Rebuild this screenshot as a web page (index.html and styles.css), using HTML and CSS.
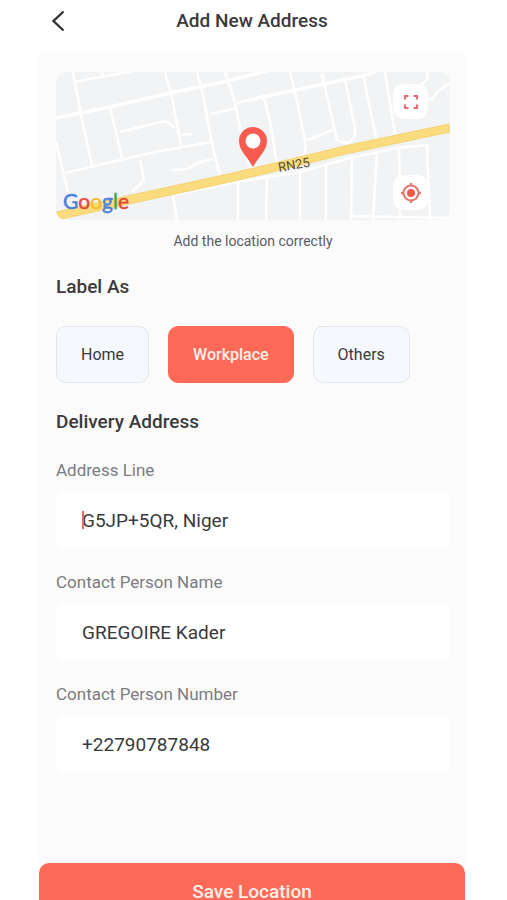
FILE: index.html
```
<!DOCTYPE html>
<html lang="en">
<head>
  <meta charset="UTF-8">
  <meta name="viewport" content="width=device-width, initial-scale=1.0">
  <title>Add New Address</title>
  <link rel="stylesheet" href="styles.css">
</head>
<body>
  <div class="screen">
    <header class="topbar">
      <button type="button" class="back" aria-label="Back">
        <svg width="14" height="24" viewBox="0 0 14 24"><path d="M12.5 2.5 2.5 12l10 9.5" fill="none" stroke="#333" stroke-width="2.4"/></svg>
      </button>
      <h1>Add New Address</h1>
    </header>

    <form class="address-form">
      <div class="map">
        <svg class="map-canvas" viewBox="0 0 394 148" preserveAspectRatio="xMidYMid slice">
          <rect width="394" height="148" fill="#f1f3f5"/>
          <!-- side streets -->
          <g fill="none" stroke="#fff" stroke-width="2.6" stroke-linejoin="round">
            <path d="M0 46 54 35 114 21 167 10 215-2" stroke-width="3.4"/>
            <path d="M17 0 25 43 36 93M19 10 50 4 84-2M45 0 49 5"/>
            <path d="M54 35 66 86M64 60 105 50Q113 48 118 56M109 0 115 21 125 73M126 63 136 62"/>
            <path d="M9 101 64 88 94 81 154 70M0 70 12 120"/>
            <path d="M141 0 147 23 157 76 164 104M116 98 131 97 144 90 157 87M84 88 88 108 76 120"/>
            <path d="M169 0 179 30 184 56 194 96M154 42 181 36M181 31 208 24"/>
            <path d="M194 28 234 19 301 5 320 0" stroke-width="3.4"/>
            <path d="M208 26 214 50 221 92M234 0 239 20 250 73 248 86"/>
            <path d="M266 2 281 68Q286 72 293 70 301 66 299 56L289 8M251 68 277 58"/>
            <path d="M307 3 321 70M329 0 339 62M371 0 372 7 364 14M394 11 381 20 376 28 371 26"/>
            <path d="M117 123 180 110 244 100 294 86 341 76 371 73 374 148M294 144 394 146"/>
            <path d="M117 123 121 148M182 110V148M211 103 210 148M244 100V148M270 92V148M296 85 295 148M321 80 317 148M343 75 344 148"/>
          </g>
          <!-- main road -->
          <path d="M1 144 72 128 164 108 199 100 294 77 394 56" fill="none" stroke="#f4d473" stroke-width="9"/>
          <path d="M1 144 72 128 164 108 199 100 294 77 394 56" fill="none" stroke="#fadb7d" stroke-width="7"/>
          <text class="road-name" x="223" y="100" transform="rotate(-10 223 100)">RN25</text>
          <!-- location pin -->
          <path d="M197 95C192 85 183 79 183 69a14 14 0 0 1 28 0C211 79 202 85 197 95Z" fill="#f65b50"/>
          <circle cx="197" cy="69" r="7.5" fill="#fff"/>
        </svg>
        <div class="map-brand"><span class="blue">G</span><span class="red">o</span><span class="yellow">o</span><span class="blue">g</span><span class="green">l</span><span class="red">e</span></div>
        <button type="button" class="map-btn expand" aria-label="Full screen">
          <svg width="16" height="16" viewBox="0 0 16 16"><path d="M5.500 2H2v3.500M10.500 2H14v3.500M2 10.500V14h3.500M14 10.500V14h-3.500" fill="none" stroke="#e66f76" stroke-width="2.200"/></svg>
        </button>
        <button type="button" class="map-btn locate" aria-label="My location">
          <svg width="22" height="22" viewBox="0 0 22 22"><circle cx="11" cy="11" r="7.500" fill="none" stroke="#e0796c" stroke-width="2"/><circle cx="11" cy="11" r="4" fill="#f4574b"/><path d="M11 1v3M11 18v3M1 11h3M18 11h3" stroke="#e0796c" stroke-width="2.400"/></svg>
        </button>
      </div>
      <p class="hint">Add the location correctly</p>

      <h2>Label As</h2>
      <div class="labels">
        <button type="button" class="chip">Home</button>
        <button type="button" class="chip active">Workplace</button>
        <button type="button" class="chip">Others</button>
      </div>

      <h2>Delivery Address</h2>
      <div class="field">
        <label for="address">Address Line</label>
        <div class="input-box">
          <input type="text" id="address" name="address" value="G5JP+5QR, Niger">
          <span class="caret"></span>
        </div>
      </div>
      <div class="field">
        <label for="name">Contact Person Name</label>
        <div class="input-box">
          <input type="text" id="name" name="name" value="GREGOIRE Kader">
        </div>
      </div>
      <div class="field">
        <label for="phone">Contact Person Number</label>
        <div class="input-box">
          <input type="tel" id="phone" name="phone" value="+22790787848">
        </div>
      </div>
    </form>

    <button type="button" class="save">Save Location</button>
  </div>
</body>
</html>
```
FILE: styles.css
```
* {
  box-sizing: border-box;
}
body {
  margin: 0;
  background: #fff;
  color: #3a3a3c;
  font-family: Roboto, Arial, sans-serif;
}
button, input {
  font-family: inherit;
  color: inherit;
}
button {
  padding: 0;
  border: none;
  cursor: pointer;
}
.screen {
  margin: 0 42px 0 39px;
}
.topbar {
  position: relative;
  display: flex;
  align-items: center;
  justify-content: center;
  height: 52px;
  padding-bottom: 10px;
}
.back {
  position: absolute;
  left: 12px;
  top: 9px;
  height: 24px;
  background: none;
}
.back svg {
  display: block;
}
h1, h2 {
  margin: 0;
  font-size: 19px;
  line-height: 24px;
  font-weight: 500;
}
.address-form {
  padding: 20px 15px 90px 17px;
  background: #fbfbfb;
}
.map {
  position: relative;
  height: 148px;
  border-radius: 10px;
  overflow: hidden;
}
.map-canvas {
  display: block;
  width: 100%;
  height: 100%;
}
.road-name {
  font-size: 13px;
  fill: #5a5033;
}
.map-brand {
  position: absolute;
  left: 7px;
  bottom: 6px;
  font-family: Lato, sans-serif;
  font-size: 21px;
  line-height: 26px;
  -webkit-text-stroke: 0.5px;
}
.blue {
  color: #4a7fe0;
}
.red {
  color: #e3493d;
}
.yellow {
  color: #f2bd2c;
}
.green {
  color: #43a35a;
}
.map-btn {
  position: absolute;
  right: 22px;
  display: flex;
  align-items: center;
  justify-content: center;
  width: 35px;
  height: 35px;
  border-radius: 10px;
  background: #fff;
}
.expand {
  top: 12px;
}
.locate {
  bottom: 10px;
}
.hint {
  margin: 11px 0 24px;
  text-align: center;
  font-size: 14px;
  line-height: 20px;
  color: #5c5c5e;
}
.labels {
  display: flex;
  gap: 19px;
  margin: 27px 0;
}
.chip {
  height: 57px;
  padding: 0 24px;
  border: 1px solid #e3e6ea;
  border-radius: 10px;
  background: #f5f8fd;
  font-size: 16px;
}
.chip.active {
  border-color: #ff6a58;
  background: #ff6a58;
  color: #fff0e8;
  font-weight: 500;
}
.field {
  margin-top: 22px;
}
h2 + .field {
  margin-top: 25px;
}
.field label {
  display: block;
  margin-bottom: 10px;
  font-size: 17px;
  line-height: 22px;
  color: #7c7c80;
}
.input-box {
  position: relative;
}
.input-box input {
  display: block;
  width: 100%;
  height: 58px;
  padding: 0 26px;
  border: none;
  border-radius: 8px;
  background: #fff;
  font-size: 19px;
}
.caret {
  position: absolute;
  left: 26px;
  top: 20px;
  width: 2px;
  height: 18px;
  background: #ee6b65;
}
.save {
  display: block;
  width: 100%;
  height: 56px;
  border-radius: 10px;
  background: #ff6a58;
  color: #fff0e8;
  font-size: 19px;
  font-weight: 500;
}
```
